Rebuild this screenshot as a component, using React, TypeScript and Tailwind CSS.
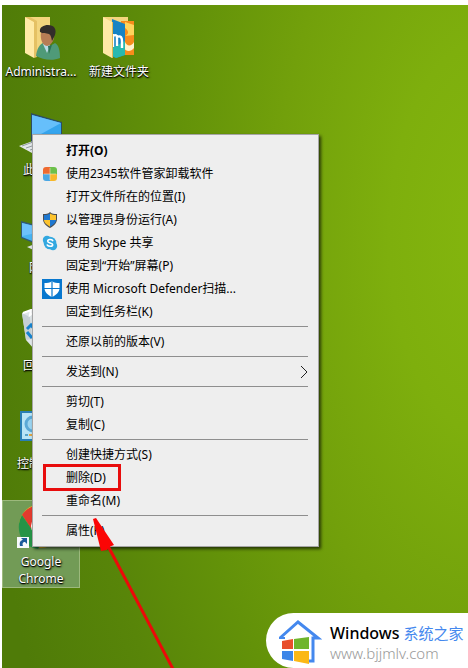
import type { ReactNode } from 'react';

type MenuEntry = {
  label: string;
  icon?: ReactNode;
  bold?: boolean;
  submenu?: boolean;
  marked?: boolean;
};

type Shortcut = {
  label: string;
  icon: ReactNode;
  selected?: boolean;
};

function UserFolderIcon() {
  return (
    <svg viewBox="0 0 48 48" className="h-12 w-12">
      <path d="M8 2h25v37H16z" fill="#f3d57e" />
      <path d="M8 2l9 5v36l-9-5z" fill="#ffeaa6" />
      <path d="M17 7l-9-5 5 0 7 4v36l-3 1z" fill="#e5c164" />
      <path d="M19 41c1-7 3-12 9-14l5 4 5-3c4 2 5 8 5 15-7 3-17 2-24-2z" fill="#4f9a78" />
      <path d="M26 29l4 9 3-7-3-4z" fill="#b9dbe8" />
      <path d="M31 31l4-1-3 9z" fill="#2e7358" />
      <path d="M24 17c-1 7 1 13 6 14 5-1 8-7 7-13-3-5-10-6-13-1z" fill="#b77d55" />
      <path d="M23 17c-1-5 4-7 8-7 6 0 9 4 7 10l-3 6c-1-4-1-6-3-7-3-1-6 0-9-2z" fill="#332d2a" />
    </svg>
  );
}

function FilesFolderIcon() {
  return (
    <svg viewBox="0 0 48 48" className="h-12 w-12">
      <path d="M8 2h25v37H16z" fill="#f3d57e" />
      <path d="M26 6h13v34H26z" fill="#f78c1c" />
      <path d="M30 7l9 3v10l-9 1c4-2 4-5 0-8z" fill="#ffd45c" />
      <path d="M30 27c2 5 7 4 9 0v6c-3 4-8 4-10 0z" fill="#fff2cb" />
      <path d="M17 4l13 5v31l-9 3-4-2z" fill="#1683c4" />
      <path d="M17 33l13-7v14l-9 3-4-2z" fill="#28b9b0" />
      <path d="M18 19v13M18 21c4-2 4 0 4 3v7M22 22c4-2 5 1 5 4v7" fill="none" stroke="#fff" strokeWidth="2.4" />
      <path d="M8 2l9 5v36l-9-5z" fill="#ffeaa6" />
      <path d="M17 7l1 0v36l-1 0z" fill="#e0b955" />
    </svg>
  );
}

function ComputerIcon() {
  return (
    <svg viewBox="0 0 48 48" className="h-12 w-12">
      <path d="M14 0l31 9v28l-31-5z" fill="#2c4d63" />
      <path d="M15 2l29 8v25l-29-4z" fill="#35a5ee" />
      <path d="M15 2l29 8-29 16z" fill="#66bffb" />
      <path d="M2 33l14-5 14 5-15 7z" fill="#e4e8ea" />
      <path d="M5 33l11-4M9 35l12-4M13 37l13-4" stroke="#929da2" />
    </svg>
  );
}

function NetworkIcon() {
  return (
    <svg viewBox="0 0 48 48" className="h-12 w-12">
      <path d="M4 10l30 8v21L4 27z" fill="#315b75" />
      <path d="M5 12l28 7v18L5 26z" fill="#48b4f2" />
      <path d="M5 12l28 7-28 6z" fill="#6dc2fb" />
      <path d="M10 36l8-3 12 4-9 4z" fill="#dce3e5" />
    </svg>
  );
}

function RecycleIcon() {
  return (
    <svg viewBox="0 0 48 48" className="h-12 w-12">
      <path d="M5 4l10-3 24 4-4 35-18 0-8-9z" fill="#dfe6e8" />
      <path d="M5 4l8 4 2 22-6 1z" fill="#c6d0d4" />
      <path d="M6 4l8-3-1 5 6-4 5 4 14-1" fill="none" stroke="#fff" strokeWidth="2" />
      <path d="M10 20l4-4 4 5M10 23l5 6M16 29l7 0 2-6" fill="none" stroke="#1684cf" strokeWidth="3" />
    </svg>
  );
}

function ControlPanelIcon() {
  return (
    <svg viewBox="0 0 48 48" className="h-12 w-12">
      <path d="M3 4h40v30H3z" fill="#287fb5" />
      <path d="M5 6h36v26H5z" fill="#b8e4f6" />
      <path d="M16 10a7 7 0 0 0 0 14z" fill="#9ad3ef" />
      <circle cx="16" cy="17" r="7" fill="none" stroke="#5ba9d6" strokeWidth="3" />
      <path d="M8 28h3" stroke="#55a4c9" strokeWidth="2" />
      <path d="M12 28h5" stroke="#e0a342" strokeWidth="2" />
    </svg>
  );
}

function ChromeIcon() {
  return (
    <svg viewBox="0 0 48 48" className="h-12 w-12">
      <circle cx="24" cy="21" r="22" fill="#f2c51d" />
      <path d="M5 10C14-4 36-3 43 10H24L15 25z" fill="#e33b2e" />
      <path d="M5 10c-7 12-3 31 16 34l9-17-14-1z" fill="#269447" />
      <circle cx="24" cy="21" r="10" fill="#fff" />
      <circle cx="24" cy="21" r="8" fill="#4285f4" />
      <path d="M0 32h12v11H0z" fill="#f7f9fc" />
      <path d="M3 41c-1-4 1-6 3-6l-2-2h6v6l-2-2c-2 0-3 1-2 4z" fill="#1c5b9b" />
    </svg>
  );
}

function ManagerIcon() {
  return (
    <svg viewBox="0 0 16 16" className="h-4 w-4">
      <path d="M4 1h4v7H1V4q0-3 3-3z" fill="#ee6a30" />
      <path d="M8 1h4q3 0 3 3v4H8z" fill="#6cc04a" />
      <path d="M1 8h7v7H4q-3 0-3-3z" fill="#4aa7e4" />
      <path d="M8 8h7v4q0 3-3 3H8z" fill="#f7b82a" />
      <path d="M8 2v12M2 8h12" stroke="#f9e2c0" strokeWidth=".6" />
    </svg>
  );
}

function AdminShieldIcon() {
  return (
    <svg viewBox="0 0 16 16" className="h-4 w-4">
      <path d="M8 0c2 2 4 2 7 2v5c0 4-3 7-7 9-4-2-7-5-7-9V2c3 0 5 0 7-2z" fill="#4b4d4f" />
      <path d="M8 1.5V8H2V3c2 0 4 0 6-1.5z" fill="#1e78d0" />
      <path d="M8 1.5C10 3 12 3 14 3v5H8z" fill="#fcc32e" />
      <path d="M2 8h6v6.7C5 13 2 11 2 8z" fill="#fcc32e" />
      <path d="M8 8h6c0 3-3 5-6 6.7z" fill="#1e78d0" />
    </svg>
  );
}

function SkypeIcon() {
  return (
    <svg viewBox="0 0 16 16" className="h-4 w-4">
      <circle cx="5" cy="5" r="4.200" fill="#33a8e0" />
      <circle cx="11" cy="11" r="4.200" fill="#33a8e0" />
      <circle cx="8" cy="8" r="6.300" fill="#33a8e0" />
      <path d="M10.7 5.6C9.5 4 5.7 4.200 5.7 6.200c0 2.200 5 1.200 5 3.500 0 2-4.200 2.200-5.400.3" fill="none" stroke="#fff" strokeWidth="1.600" strokeLinecap="round" />
    </svg>
  );
}

function DefenderIcon() {
  return (
    <svg viewBox="0 0 20 20" className="h-5 w-5 shrink-0">
      <path d="M0 0h20v20H0z" fill="#0877ce" />
      <path d="M10 2c2 2 5 2 7.500 2v5c0 4-3 7-7.500 9-4.500-2-7.500-5-7.500-9V4C5 4 8 4 10 2z" fill="#fff" />
      <path d="M10 2v16M2 9.500h16" stroke="#0877ce" strokeWidth="1.200" />
    </svg>
  );
}

function HouseLogo() {
  return (
    <svg viewBox="0 0 44 46" className="h-[46px] w-11 shrink-0">
      <path d="M2 20L20 4l20 16h-5v23h-5" fill="none" stroke="#4488ee" strokeWidth="3" />
      <path d="M1 20h6" stroke="#4488ee" strokeWidth="2" />
      <path d="M4 23l11-2v10H4z" fill="#e84e2c" />
      <path d="M16 21l15-2v12H16z" fill="#6fb52c" />
      <path d="M4 33h11v10L4 41z" fill="#3d86e8" />
      <path d="M16 33h15v13l-15-3z" fill="#fbb816" />
    </svg>
  );
}

const columns: Shortcut[][] = [
  [
    { label: 'Administra...', icon: <UserFolderIcon /> },
    { label: '此电脑', icon: <ComputerIcon /> },
    { label: '网络', icon: <NetworkIcon /> },
    { label: '回收站', icon: <RecycleIcon /> },
    { label: '控制面板', icon: <ControlPanelIcon /> },
    { label: 'Google Chrome', icon: <ChromeIcon />, selected: true },
  ],
  [{ label: '新建文件夹', icon: <FilesFolderIcon /> }],
];

const groups: MenuEntry[][] = [
  [
    { label: '打开(O)', bold: true },
    { label: '使用2345软件管家卸载软件', icon: <ManagerIcon /> },
    { label: '打开文件所在的位置(I)' },
    { label: '以管理员身份运行(A)', icon: <AdminShieldIcon /> },
    { label: '使用 Skype 共享', icon: <SkypeIcon /> },
    { label: '固定到“开始”屏幕(P)' },
    { label: '使用 Microsoft Defender扫描...', icon: <DefenderIcon /> },
    { label: '固定到任务栏(K)' },
  ],
  [{ label: '还原以前的版本(V)' }],
  [{ label: '发送到(N)', submenu: true }],
  [{ label: '剪切(T)' }, { label: '复制(C)' }],
  [{ label: '创建快捷方式(S)' }, { label: '删除(D)', marked: true }, { label: '重命名(M)' }],
  [{ label: '属性(R)' }],
];

function DesktopShortcut({ label, icon, selected }: Shortcut) {
  return (
    <div className="h-[98px]">
      <button
        className={`flex w-full flex-col items-center border pt-1 ${
          selected ? 'border-[#9cb97c] bg-[#729b56]' : 'border-transparent'
        }`}
      >
        {icon}
        <span className="max-w-[76px] text-xs leading-[17px] text-white [text-shadow:1px_1px_2px_#000,0_1px_1px_#000]">
          {label}
        </span>
      </button>
    </div>
  );
}

function MenuItem({ label, icon, bold, submenu, marked }: MenuEntry) {
  return (
    <button role="menuitem" className="relative flex h-[23px] w-full items-center text-left">
      <span className="flex w-6 shrink-0 items-center">{icon}</span>
      <span className={bold ? 'font-bold' : ''}>{label}</span>
      {submenu && (
        <svg viewBox="0 0 8 14" className="ml-auto h-3.5 w-2">
          <path d="M1 1l6 6-6 6" fill="none" stroke="#222" />
        </svg>
      )}
      {marked && <span className="absolute -top-0.5 left-px h-[27px] w-[78px] border-3 border-[#e80c0c]" />}
    </button>
  );
}

function ContextMenu() {
  return (
    <div
      role="menu"
      className="absolute top-[129px] left-[30px] w-[287px] border border-[#a5a5a5] bg-[#eeeeee] py-1 pr-2.5 pl-[9px] text-xs text-black shadow-[2px_2px_3px_rgba(0,0,0,0.65)]"
    >
      {groups.map((group, i) => (
        <div key={i}>
          {i > 0 && (
            <div role="separator" className="flex h-[7px] items-center">
              <div className="h-px w-full bg-[#8e8e8e]" />
            </div>
          )}
          {group.map((entry) => (
            <MenuItem key={entry.label} {...entry} />
          ))}
        </div>
      ))}
    </div>
  );
}

export default function App() {
  return (
    <div className="flex min-h-screen bg-white pt-[5px] pl-0.5 font-['Noto_Sans','Noto_Sans_CJK_SC',sans-serif]">
      <main className="relative flex-1 overflow-hidden bg-[radial-gradient(ellipse_110%_150%_at_105%_35%,#84b60e_0%,#7eaf0d_20%,#72a00b_42%,#639209_62%,#588509_80%,#4f7b08_100%)]">
        <div className="flex pt-[5px]">
          {columns.map((column, i) => (
            <div key={i} className="w-[78px]">
              {column.map((shortcut) => (
                <DesktopShortcut key={shortcut.label} {...shortcut} />
              ))}
            </div>
          ))}
        </div>

        <ContextMenu />

        {/* pointer to the delete entry */}
        <svg viewBox="0 0 82 150" className="pointer-events-none absolute top-[513px] left-[90px] h-[150px] w-[82px]">
          <path d="M16 28L81 151" stroke="#ed0909" strokeWidth="3" />
          <path d="M1 1l3-1 18 27-5 2-2 3-6 1z" fill="#fb0505" />
        </svg>

        <footer className="absolute right-0 bottom-0 flex h-[55px] w-[202px] items-center gap-2 rounded-l-full bg-white pl-3">
          <HouseLogo />
          <div className="whitespace-nowrap">
            <div className="flex items-center gap-1 leading-5">
              <span className="text-base font-medium text-black">Windows</span>
              <span className="text-[15px] text-[#4488ee]">系统之家</span>
            </div>
            <a href="#" className="block text-[15px] leading-4 font-light text-[#999999]">
              www.bjjmlv.com
            </a>
          </div>
        </footer>
      </main>
    </div>
  );
}
